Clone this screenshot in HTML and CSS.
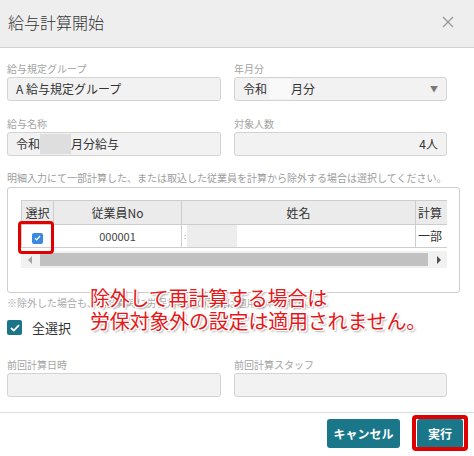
FILE: index.html
```html
<!DOCTYPE html>
<html lang="ja">
<head>
<meta charset="utf-8">
<link rel="stylesheet" href="styles.css">
</head>
<body>
<div class="dialog">
  <header class="dlg-head">
    <h1 class="dlg-title">給与計算開始</h1>
    <span class="close"><svg width="12" height="12" viewBox="0 0 12 12"><path d="M1 1L11 11M11 1L1 11" stroke="#9a9a9a" stroke-width="1.4" fill="none"/></svg></span>
  </header>
  <main class="dlg-body">
    <div class="form-grid">
      <div class="field"><label class="lbl">給与規定グループ</label><div class="input">A 給与規定グループ</div></div>
      <div class="field"><label class="lbl">年月分</label><div class="input select">令和<span class="blur light"></span>月分<span class="arrow">▼</span></div></div>
      <div class="field"><label class="lbl">給与名称</label><div class="input">令和<span class="blur"></span>月分給与</div></div>
      <div class="field"><label class="lbl">対象人数</label><div class="input num">4人</div></div>
    </div>
    <p class="note">明細入力にて一部計算した、または取込した従業員を計算から除外する場合は選択してください。</p>
    <section class="emp-box">
      <div class="table-wrap">
        <div class="table-clip">
          <table class="emp-table">
            <colgroup><col class="c1"><col class="c2"><col class="c3"><col class="c4"></colgroup>
            <thead><tr><th>選択</th><th>従業員No</th><th>姓名</th><th class="left">計算</th></tr></thead>
            <tbody><tr>
              <td><span class="cb-blue"><svg width="7" height="6" viewBox="0 0 7 6"><path d="M1 3.2L2.7 4.8L6 1" stroke="#fff" stroke-width="1.2" fill="none"/></svg></span></td>
              <td>000001</td>
              <td class="left"><span class="colon">:</span><span class="name-blur"></span></td>
              <td class="left">一部</td>
            </tr></tbody>
          </table>
        </div>
        <div class="hscroll"><span class="arr"><span class="tri-left"></span></span><span class="thumb"></span><span class="arr"><span class="tri-right"></span></span></div>
        <div class="mark mark-check"></div>
      </div>
    </section>
    <div class="after-box">
      <p class="note2">※除外した場合も、再計算時に労保対象外の設定は適用されません。</p>
      <label class="check-all"><span class="cb-teal"><svg width="10" height="8" viewBox="0 0 10 8"><path d="M1 4L3.8 6.6L9 1.2" stroke="#fff" stroke-width="1.8" fill="none"/></svg></span>全選択</label>
      <div class="callout">除外して再計算する場合は<br>労保対象外の設定は適用されません。</div>
    </div>
    <div class="form-grid last">
      <div class="field"><label class="lbl">前回計算日時</label><div class="input"></div></div>
      <div class="field"><label class="lbl">前回計算スタッフ</label><div class="input"></div></div>
    </div>
  </main>
  <footer class="dlg-foot">
    <button class="btn btn-cancel">キャンセル</button>
    <span class="btn-wrap"><button class="btn btn-run">実行</button><span class="mark mark-run"></span></span>
  </footer>
</div>
</body>
</html>
```
FILE: styles.css
```css
* { box-sizing: border-box; }
body {
  margin: 0;
  font-family: "Noto Sans CJK JP", "Noto Sans", sans-serif;
  color: #333;
  background: #fff;
}
.dialog { width: 474px; height: 456px; overflow: hidden; }
.dlg-head {
  height: 48px;
  background: #eeeeee;
  border-bottom: 1px solid #d2d2d2;
  display: flex;
  align-items: center;
  justify-content: space-between;
  padding: 0 20px 4px 8px;
}
.dlg-title { margin: 0; font-size: 16px; font-weight: 300; line-height: 20px; color: #333; }
.close { display: flex; }
.dlg-body { padding: 14px 0 0 7px; }
.form-grid {
  display: grid;
  grid-template-columns: 214px 213px;
  column-gap: 13px;
  row-gap: 16px;
}
.lbl {
  display: block;
  font-size: 10px;
  line-height: 14px;
  height: 14px;
  margin-bottom: 1px;
  color: #a3a3a3;
}
.input {
  height: 24px;
  border: 1px solid #d3d3d3;
  border-radius: 3px;
  background: #f2f2f2;
  font-size: 12px;
  line-height: 22px;
  color: #333;
  padding: 0 8px;
  display: flex;
  align-items: center;
  white-space: nowrap;
}
.input.num { justify-content: flex-end; padding-right: 8px; }
.input.select { padding-right: 8px; }
.arrow { margin-left: auto; font-size: 8px; color: #7a7a7a; }
.blur { display: inline-block; width: 31px; height: 20px; background: #dedede; }
.blur.light { width: 22px; background: #f9f9f9; margin-left: 2px; }
.note {
  margin: 14px 0 2px;
  font-size: 10px;
  line-height: 15px;
  color: #9c9c9c;
  white-space: nowrap;
}
.emp-box {
  width: 453px;
  border: 1px solid #cfcfcf;
  border-radius: 3px;
  padding: 12px 12px 24px 13px;
}
.table-wrap { position: relative; }
.table-clip { overflow: hidden; width: 426px; }
.emp-table {
  border-collapse: collapse;
  table-layout: fixed;
  width: 470px;
  font-size: 12px;
}
.c1 { width: 32px; }
.c2 { width: 128px; }
.c3 { width: 234px; }
.c4 { width: 76px; }
.emp-table th, .emp-table td {
  border: 1px solid #cdcdcd;
  text-align: center;
  padding: 0 2px;
  white-space: nowrap;
  overflow: hidden;
}
.emp-table th { height: 24px; background: #ebebeb; font-weight: normal; color: #333; line-height: 22px; }
.emp-table td { height: 23px; background: #fff; font-size: 11px; color: #444; line-height: 22px; }
.emp-table td:first-child, .emp-table th:first-child { padding: 0; }
.emp-table .left { text-align: left; }
.emp-table td.left { font-size: 12px; color: #333; }
.cb-blue {
  display: inline-flex;
  align-items: center;
  justify-content: center;
  width: 11px;
  height: 11px;
  border-radius: 2px;
  background: #3b88e2;
  vertical-align: middle;
}
.colon { font-size: 8px; color: #888; vertical-align: top; }
.name-blur { display: inline-block; width: 50px; height: 22px; background: #ededed; vertical-align: top; margin-left: 1px; }
.hscroll {
  margin-top: 3px;
  height: 17px;
  width: 426px;
  background: #f1f1f1;
  display: flex;
  align-items: center;
}
.arr { width: 17px; height: 17px; display: flex; align-items: center; justify-content: center; }
.thumb { flex: 1; height: 13px; background: #c1c1c1; margin: 0 2px; }
.tri-left { width: 0; height: 0; border-top: 4px solid transparent; border-bottom: 4px solid transparent; border-right: 4px solid #a3a3a3; }
.tri-right { width: 0; height: 0; border-top: 4px solid transparent; border-bottom: 4px solid transparent; border-left: 4px solid #505050; }
.mark { position: absolute; border: 3px solid #e00000; border-radius: 4px; }
.mark-check { left: -3px; top: 21px; width: 36px; height: 33px; }
.after-box { position: relative; }
.note2 { margin: 3px 0 0; font-size: 10px; line-height: 14px; color: #ababab; white-space: nowrap; }
.check-all { display: flex; align-items: center; gap: 10px; margin-top: 10px; font-size: 13px; line-height: 15px; color: #333; }
.cb-teal {
  display: inline-flex;
  align-items: center;
  justify-content: center;
  width: 15px;
  height: 15px;
  border-radius: 2px;
  background: #1b7487;
}
.callout {
  position: absolute;
  left: 83px;
  top: -10px;
  font-size: 20px;
  line-height: 23px;
  color: #e3191c;
  white-space: nowrap;
  letter-spacing: -0.2px;
  text-shadow: -1px -1px 0 #fff, 1px -1px 0 #fff, -1px 1px 0 #fff, 1px 1px 0 #fff, 0 -1px 0 #fff, 0 1px 0 #fff, -1px 0 0 #fff, 1px 0 0 #fff, 2px 2px 2px rgba(0,0,0,0.35);
}
.form-grid.last { margin-top: 23px; }
.dlg-foot {
  margin-top: 15px;
  border-top: 1px solid #dcdcdc;
  padding: 6px 11px 0 0;
  display: flex;
  justify-content: flex-end;
  gap: 17px;
}
.btn {
  height: 29px;
  border: none;
  border-radius: 3px;
  background: #1a7689;
  color: #fff;
  font-family: inherit;
  font-weight: bold;
  font-size: 12px;
  padding: 0;
}
.btn-cancel { width: 73px; }
.btn-run { width: 46px; }
.btn-wrap { position: relative; display: flex; }
.mark-run { left: -5px; right: -5px; top: -4px; bottom: -3px; border-width: 4px; }
```
